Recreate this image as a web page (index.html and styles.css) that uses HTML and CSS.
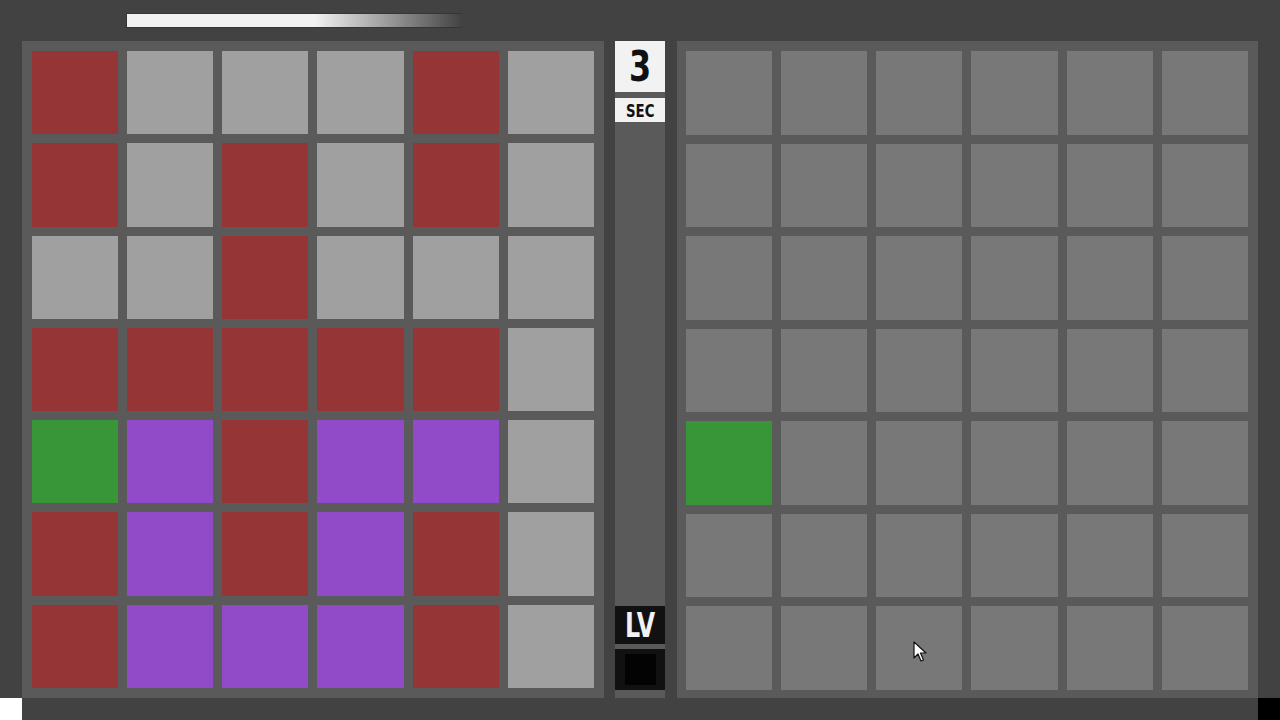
FILE: index.html
```html
<!DOCTYPE html>
<html lang="en">
<head>
    <meta charset="UTF-8">
    <title>Memory Grid</title>
    <link rel="stylesheet" href="styles.css">
</head>
<body>
    <div class="topbar">
        <div class="timebar"></div>
    </div>

    <div class="board">
        <div class="panel" id="target"></div>

        <div class="middle">
            <div class="count"><span>3</span></div>
            <div class="unit"><span>SEC</span></div>
            <div class="spacer"></div>
            <div class="level"><span>LV</span></div>
            <div class="level-slot"><i></i></div>
        </div>

        <div class="panel panel-play" id="play"></div>
    </div>

    <div class="footer">
        <div class="mark-white"></div>
        <div class="mark-black"></div>
    </div>

    <svg class="pointer" width="14" height="22" viewBox="0 0 14 22">
        <path d="M1 1 L1 17 L5 13 L8 20 L10.5 19 L7.5 12 L13 12 Z" fill="#fff" stroke="#111" stroke-width="1.2" stroke-linejoin="round"/>
    </svg>

    <script>
        // r = red, g = grey, e = green (start), p = purple
        const pattern = [
            "rgggrg",
            "rgrgrg",
            "ggrggg",
            "rrrrrg",
            "eprppg",
            "rprprg",
            "rppprg"
        ];

        const names = { r: "red", g: "grey", e: "green", p: "purple" };

        const target = document.getElementById('target');
        const play = document.getElementById('play');

        pattern.forEach((row, y) => {
            row.split('').forEach((c, x) => {
                const cell = document.createElement('div');
                cell.className = 'cell ' + names[c];
                target.appendChild(cell);

                const blank = document.createElement('div');
                blank.className = 'cell ' + (c === 'e' ? 'green' : 'blank');
                play.appendChild(blank);
            });
        });
    </script>
</body>
</html>
```

FILE: styles.css
```css
* {
    box-sizing: border-box;
}

body {
    margin: 0;
    width: 1280px;
    height: 720px;
    overflow: hidden;
    background-color: #424242;
    font-family: "DejaVu Sans", "Liberation Sans", sans-serif;
    position: relative;
}

.topbar {
    height: 41px;
    padding: 13px 0 0 126px;
}

.timebar {
    width: 336px;
    height: 15px;
    border: 1px solid #353535;
    border-right: none;
    background: linear-gradient(to right, #f2f2f2 0, #f2f2f2 56%, rgba(242, 242, 242, 0) 100%);
}

.board {
    display: flex;
    height: 657px;
    padding-left: 22px;
}

.panel {
    width: 582px;
    height: 657px;
    padding: 10px;
    background-color: #5a5a5a;
    display: grid;
    grid-template-columns: repeat(6, 1fr);
    grid-template-rows: repeat(7, 1fr);
    column-gap: 9px;
    row-gap: 9px;
}

.panel-play {
    width: 581px;
    padding: 10px 10px 8px 9px;
}

.cell {
    background-color: #a0a0a0;
}

.red {
    background-color: #963535;
}

.grey {
    background-color: #a0a0a0;
}

.green {
    background-color: #389638;
}

.purple {
    background-color: #914ac8;
}

.blank {
    background-color: #787878;
}

.middle {
    width: 50px;
    margin: 0 12px 0 11px;
    background-color: #5a5a5a;
    display: flex;
    flex-direction: column;
}

/* narrow the digits and labels like a condensed display face */
.middle span {
    display: inline-block;
    font-weight: bold;
    transform: scaleX(0.74);
}

.count {
    height: 51px;
    background-color: #f2f2f2;
    color: #111;
    font-size: 43px;
    line-height: 51px;
    text-align: center;
}

.unit {
    height: 24px;
    margin-top: 6px;
    background-color: #f2f2f2;
    color: #111;
    font-size: 18px;
    line-height: 25px;
    text-align: center;
}

.spacer {
    flex: 1;
}

.level {
    height: 38px;
    background-color: #111;
    color: #f2f2f2;
    font-size: 33px;
    line-height: 39px;
    text-align: center;
}

.level span {
    transform: scaleX(0.72);
}

.level-slot {
    height: 41px;
    margin: 5px 0 8px;
    background-color: #111;
    display: flex;
    align-items: center;
    justify-content: center;
}

.level-slot i {
    width: 31px;
    height: 31px;
    background-color: #030303;
}

.footer {
    height: 22px;
    display: flex;
    justify-content: space-between;
}

.mark-white {
    width: 22px;
    background-color: #fff;
}

.mark-black {
    width: 22px;
    background-color: #000;
}

/* mouse pointer over the play grid */
.pointer {
    position: absolute;
    left: 913px;
    top: 641px;
}
```
